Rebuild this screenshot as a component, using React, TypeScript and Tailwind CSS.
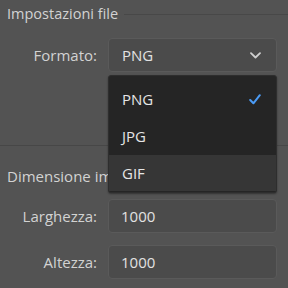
import React from "react";

const font = { fontFamily: '"Open Sans", "Noto Sans", sans-serif' };

function Chevron() {
  return (
    <svg width="11" height="7" viewBox="0 0 11 7" className="block">
      <path d="M1 1.2 L5.5 5.5 L10 1.2" fill="none" stroke="#cfcfcf" strokeWidth="1.8" strokeLinecap="round" strokeLinejoin="round" />
    </svg>
  );
}

function Check() {
  return (
    <svg width="12" height="11" viewBox="0 0 12 11" className="block">
      <path d="M1.2 6 L4.4 9.3 L10.8 1.2" fill="none" stroke="#4b9bf5" strokeWidth="2" strokeLinecap="round" strokeLinejoin="round" />
    </svg>
  );
}

export default function App() {
  return (
    <div className="w-[288px] h-[288px] bg-[#535353] overflow-hidden text-[#d4d4d4]" style={font}>
      <div className="flex items-center h-[28px] pl-[7px] gap-[6px]">
        <span className="text-[14.5px] leading-none text-[#d2d2d2]">Impostazioni file</span>
        <div className="flex-1 h-px bg-[#484848] mt-[1px]" />
      </div>
      <div className="flex items-center mt-[10px] h-[34px]">
        <div className="w-[97px] text-right text-[15px] text-[#d2d2d2]">Formato:</div>
        <div className="relative ml-[11px] w-[169px] h-[34px]">
          <div className="flex items-center justify-between h-full rounded-[4px] bg-[#4b4b4b] border border-[#5a5a5a] pl-[13px] pr-[15px]">
            <span className="text-[15px] text-[#e2e2e2]">PNG</span>
            <Chevron />
          </div>
          <div className="absolute left-0 top-[37px] w-[169px] h-[118px] rounded-[3px] bg-[#252525] border border-[#2e2e2e] pt-[5px] shadow-[0_1px_2px_rgba(0,0,0,0.4)] z-10">
            <div className="flex items-center justify-between h-[37px] pl-[13px] pr-[15px]">
              <span className="text-[15px] text-[#e6e6e6]">PNG</span>
              <Check />
            </div>
            <div className="flex items-center h-[37px] pl-[13px]">
              <span className="text-[15px] text-[#e6e6e6]">JPG</span>
            </div>
            <div className="flex items-center h-[36px] pl-[13px] bg-[#363636]">
              <span className="text-[15px] text-[#e6e6e6]">GIF</span>
            </div>
          </div>
        </div>
      </div>
      <div className="h-px bg-[#474747] mt-[73px]" />
      <div className="flex items-center h-[30px] mt-[15px] pl-[7px]">
        <span className="block w-[101px] overflow-hidden text-[15px] text-[#d2d2d2] whitespace-nowrap">Dimensione immagine</span>
      </div>
      <div className="flex items-center mt-[8px] h-[34px]">
        <div className="w-[97px] text-right text-[15px] text-[#d2d2d2]">Larghezza:</div>
        <div className="ml-[11px] w-[169px] h-[34px] flex items-center rounded-[4px] bg-[#4b4b4b] border border-[#5a5a5a] pl-[12px]">
          <span className="text-[15px] text-[#e2e2e2]">1000</span>
        </div>
      </div>
      <div className="flex items-center mt-[12px] h-[34px]">
        <div className="w-[97px] text-right text-[15px] text-[#d2d2d2]">Altezza:</div>
        <div className="ml-[11px] w-[169px] h-[34px] flex items-center rounded-[4px] bg-[#4b4b4b] border border-[#5a5a5a] pl-[12px]">
          <span className="text-[15px] text-[#e2e2e2]">1000</span>
        </div>
      </div>
    </div>
  );
}
